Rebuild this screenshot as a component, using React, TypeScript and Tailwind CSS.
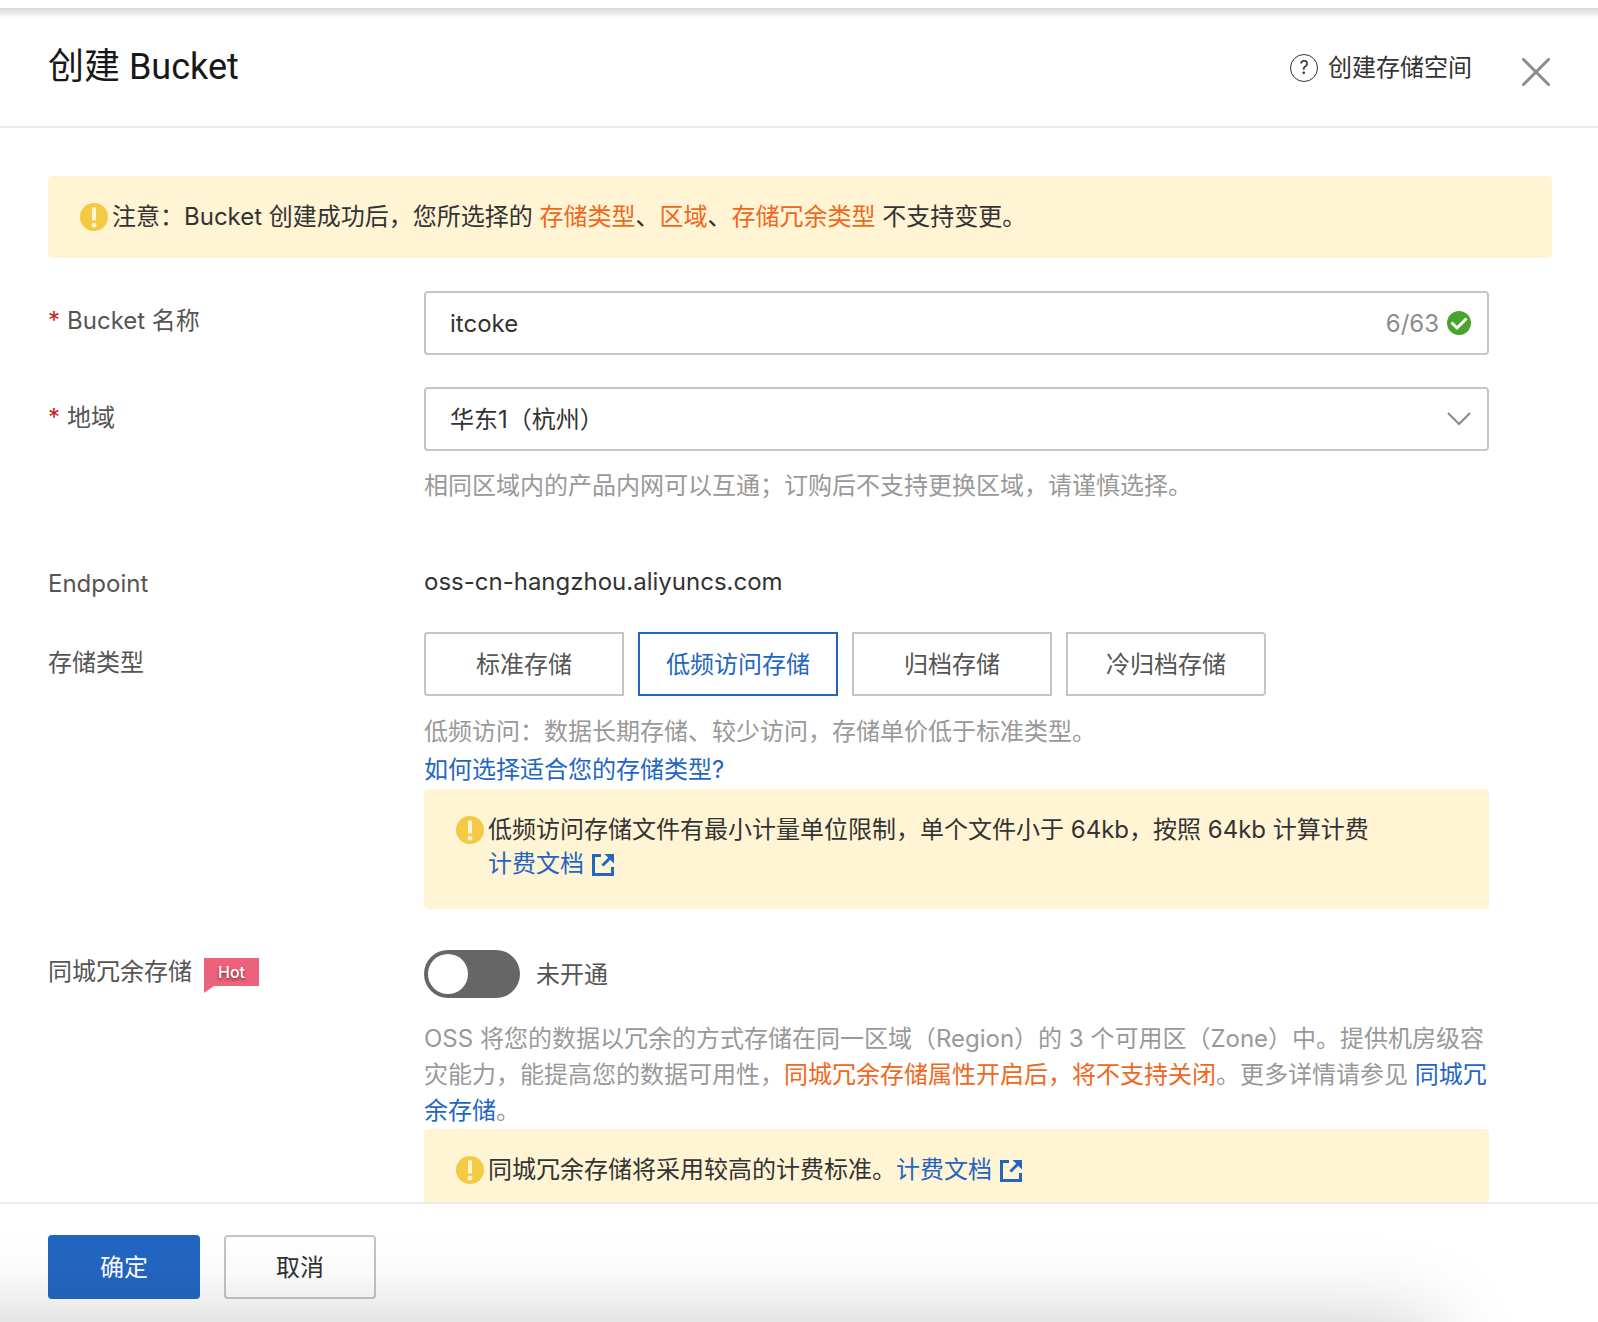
import { useId, useState } from "react";
import type { ReactNode } from "react";

function WarningIcon() {
  return (
    <svg viewBox="0 0 28 28" className="mt-[3px] size-7 shrink-0" aria-hidden="true">
      <circle cx="14" cy="14" r="14" fill="#f4c944" />
      <rect x="12" y="4.5" width="4" height="13" fill="#fff5d6" />
      <circle cx="14" cy="22.2" r="2.4" fill="#fff5d6" />
    </svg>
  );
}

function ExternalIcon() {
  return (
    <svg viewBox="0 0 22 22" className="ml-2 inline-block size-[22px] align-[-4px]" aria-hidden="true">
      <path d="M9 1.5H1.5V20.5H20.5V13" fill="none" stroke="#2366c2" strokeWidth="3" />
      <path d="M10.5 11.5L18 4" fill="none" stroke="#2366c2" strokeWidth="3" />
      <path d="M12.5 0H22V9.5Z" fill="#2366c2" />
    </svg>
  );
}

function Alert({ children, className = "" }: { children: ReactNode; className?: string }) {
  return (
    <div role="note" className={`flex gap-1 rounded bg-[#fff4d4] px-8 py-6 leading-[34px] text-[#333] ${className}`}>
      <WarningIcon />
      <div>{children}</div>
    </div>
  );
}

function Row({
  label,
  htmlFor,
  required,
  badge,
  children,
  className = "",
  labelClassName = "pt-[13px]",
}: {
  label: string;
  htmlFor?: string;
  required?: boolean;
  badge?: ReactNode;
  children: ReactNode;
  className?: string;
  labelClassName?: string;
}) {
  return (
    <div className={`flex pr-[63px] ${className}`}>
      <div className={`flex w-[376px] shrink-0 items-start leading-9 text-[#555] ${labelClassName}`}>
        <label htmlFor={htmlFor}>
          {required && <span className="mr-[7px] text-[#c5221a]">*</span>}
          {label}
        </label>
        {badge}
      </div>
      <div className="min-w-0 flex-1">{children}</div>
    </div>
  );
}

function HotBadge() {
  return (
    <span className="relative ml-3 mt-1 flex h-7 w-[55px] items-center justify-center bg-[#ec627a] text-base font-medium text-white text-shadow-[0_2px_3px_rgba(0,0,0,0.5)]">
      Hot
      <svg viewBox="0 0 10 7" className="absolute left-0 top-full h-[7px] w-[10px]" aria-hidden="true">
        <path d="M0 0H10L0 7Z" fill="#ec627a" />
      </svg>
    </span>
  );
}

const STORAGE_TYPES = ["标准存储", "低频访问存储", "归档存储", "冷归档存储"];

export default function App() {
  const [name, setName] = useState("itcoke");
  const [type, setType] = useState("低频访问存储");
  const [redundant, setRedundant] = useState(false);
  const nameId = useId();
  const regionId = useId();
  const switchId = useId();

  return (
    <div className="relative flex h-screen flex-col overflow-hidden bg-white pt-2 font-[Inter,'Noto_Sans_CJK_SC',sans-serif] text-2xl text-[#333]">
      <div className="h-[10px] shrink-0 bg-linear-to-b from-[#d8d8d8] to-white" />
      <header className="flex h-[110px] shrink-0 items-start justify-between border-b-2 border-[#ebebeb] px-12">
        <h1 className="pt-6 font-[Roboto,'Noto_Sans_CJK_SC',sans-serif] text-4xl leading-[50px] text-[#181818]">
          创建 Bucket
        </h1>
        <div className="flex items-start pt-8">
          <a href="#help" className="flex items-center gap-[10px] leading-9">
            <span className="flex size-7 items-center justify-center rounded-full border border-[#333] text-lg leading-none">
              ?
            </span>
            创建存储空间
          </a>
          <button type="button" aria-label="关闭" className="ml-[50px] mt-2">
            <svg viewBox="0 0 28 28" className="size-7" aria-hidden="true">
              <path d="M1.5 1.5L26.5 26.5M26.5 1.5L1.5 26.5" stroke="#8c8c8c" strokeWidth="3" strokeLinecap="round" />
            </svg>
          </button>
        </div>
      </header>

      <main className="min-h-0 flex-1 overflow-hidden pl-12 pr-[46px] pt-12">
        <Alert>
          注意：Bucket 创建成功后，您所选择的 <span className="text-[#f06820]">存储类型</span>、
          <span className="text-[#f06820]">区域</span>、<span className="text-[#f06820]">存储冗余类型</span> 不支持变更。
        </Alert>

        <Row label="Bucket 名称" htmlFor={nameId} required className="mt-[33px]" labelClassName="pt-3">
          <div className="flex h-16 items-center rounded border-2 border-[#c0c6cc] pl-6 pr-4">
            <input
              id={nameId}
              value={name}
              maxLength={63}
              onChange={(e) => setName(e.target.value)}
              className="min-w-0 flex-1 pt-0.5 outline-none"
            />
            <span className="pt-0.5 text-[#8c8c8c]">{name.length}/63</span>
            <svg viewBox="0 0 24 24" className="ml-2 size-6" aria-hidden="true">
              <circle cx="12" cy="12" r="12" fill="#4aa32f" />
              <path d="M4.5 11.5L10 17L19.5 7.5" fill="none" stroke="#fff" strokeWidth="3" />
            </svg>
          </div>
        </Row>

        <Row label="地域" htmlFor={regionId} required className="mt-8">
          <div className="relative">
            <select
              id={regionId}
              className="block h-16 w-full appearance-none rounded border-2 border-[#c0c6cc] bg-white pl-6 pr-14 pt-0.5 outline-none"
            >
              <option>华东1（杭州）</option>
            </select>
            <svg
              viewBox="0 0 24 14"
              className="pointer-events-none absolute right-[18px] top-[25px] h-[14px] w-6"
              aria-hidden="true"
            >
              <path d="M1 1L12 12L23 1" fill="none" stroke="#888" strokeWidth="2" />
            </svg>
          </div>
          <p className="mt-[17px] leading-9 text-[#999]">
            相同区域内的产品内网可以互通；订购后不支持更换区域，请谨慎选择。
          </p>
        </Row>

        <Row label="Endpoint" className="mt-[49px]">
          <p className="pt-[11px] leading-9">oss-cn-hangzhou.aliyuncs.com</p>
        </Row>

        <Row label="存储类型" className="mt-[30px]">
          <div role="group" aria-label="存储类型" className="flex gap-[14px]">
            {STORAGE_TYPES.map((t) => (
              <button
                key={t}
                type="button"
                aria-pressed={t === type}
                onClick={() => setType(t)}
                className={`h-16 w-[200px] border-2 pt-0.5 first:rounded-l last:rounded-r ${
                  t === type ? "border-[#2366c2] text-[#2366c2]" : "border-[#c0c6cc] text-[#555]"
                }`}
              >
                {t}
              </button>
            ))}
          </div>
          <p className="mt-[17px] leading-[38px] text-[#999]">低频访问：数据长期存储、较少访问，存储单价低于标准类型。</p>
          <p className="leading-[38px]">
            <a href="#types" className="text-[#2366c2]">
              如何选择适合您的存储类型?
            </a>
          </p>
          <Alert className="pb-7">
            低频访问存储文件有最小计量单位限制，单个文件小于 64kb，按照 64kb 计算计费
            <br />
            <a href="#billing" className="text-[#2366c2]">
              计费文档
              <ExternalIcon />
            </a>
          </Alert>
        </Row>

        <Row
          label="同城冗余存储"
          htmlFor={switchId}
          badge={<HotBadge />}
          className="mt-[41px]"
          labelClassName="pt-1"
        >
          <div className="flex items-center gap-4">
            <input
              id={switchId}
              type="checkbox"
              role="switch"
              checked={redundant}
              onChange={(e) => setRedundant(e.target.checked)}
              className="h-12 w-24 appearance-none rounded-full bg-[#666] p-1 before:block before:size-10 before:rounded-full before:bg-white checked:bg-[#2366c2] checked:before:ml-12"
            />
            <span className="pt-0.5 text-[#555]">{redundant ? "已开通" : "未开通"}</span>
          </div>
          <p className="mt-[23px] leading-9 text-[#999]">
            OSS 将您的数据以冗余的方式存储在同一区域（Region）的 3 个可用区（Zone）中。提供机房级容灾能力，能提高您的数据可用性，
            <span className="text-[#f06820]">同城冗余存储属性开启后，将不支持关闭</span>。更多详情请参见{" "}
            <a href="#zrs" className="text-[#2366c2]">
              同城冗余存储
            </a>
            。
          </p>
          <Alert>
            同城冗余存储将采用较高的计费标准。
            <a href="#zrs-billing" className="text-[#2366c2]">
              计费文档
              <ExternalIcon />
            </a>
          </Alert>
        </Row>
      </main>

      <footer className="flex h-[120px] shrink-0 items-start gap-6 border-t-2 border-[#ebebeb] bg-white px-12 pt-[31px]">
        <button type="button" className="h-16 w-[152px] rounded bg-[#2366c2] pt-0.5 text-white">
          确定
        </button>
        <button type="button" className="h-16 w-[152px] rounded border-2 border-[#c0c6cc] bg-white pt-0.5">
          取消
        </button>
      </footer>

      <div className="pointer-events-none absolute inset-x-0 bottom-0 h-24 overflow-hidden" aria-hidden="true">
        <div className="absolute -left-40 right-[165px] top-full h-60 shadow-[0_0_86px_rgba(0,0,0,0.21)]" />
      </div>
    </div>
  );
}
